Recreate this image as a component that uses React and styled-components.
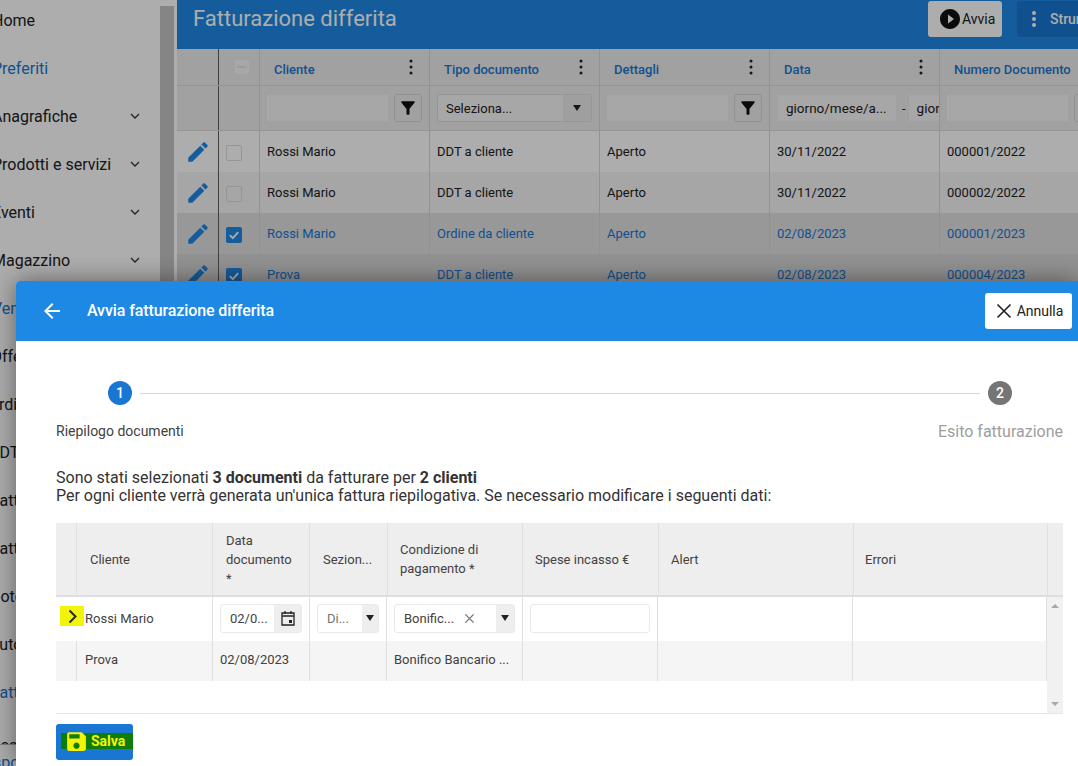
import React from 'react';
import styled, { createGlobalStyle } from 'styled-components';

const GlobalStyle = createGlobalStyle`
  html, body {
    margin: 0;
    padding: 0;
    background: #fff;
  }
  * {
    box-sizing: border-box;
  }
`;

const Page = styled.div`
  position: relative;
  width: 1078px;
  height: 766px;
  overflow: hidden;
  display: flex;
  font-family: Roboto, 'Liberation Sans', sans-serif;
  color: #212121;
`;

const Overlay = styled.div`
  position: absolute;
  inset: 0;
  background: rgba(0, 0, 0, 0.32);
`;

const Sidebar = styled.aside`
  width: 160px;
  flex: none;
  margin-top: -4px;
  overflow: hidden;
`;

const NavItem = styled.div`
  height: ${(p) => p.$height || 48}px;
  display: flex;
  align-items: center;
  justify-content: space-between;
  padding-right: 20px;
  font-size: 16px;
  white-space: nowrap;
  color: ${(p) => (p.$active ? '#1976d2' : '#212121')};
`;

const NavLabel = styled.span`
  margin-left: ${(p) => p.$offset}px;
`;

const SideFoot = styled.div`
  height: 29px;
  padding-top: 20px;
  overflow: hidden;
  font-size: 16px;
  line-height: 19px;
  border-bottom: 1px solid #b8b8b8;
  white-space: nowrap;
`;

const SideScroll = styled.div`
  width: 14px;
  flex: none;
  margin-top: 6px;
  background: #c4c4c4;
`;

const Main = styled.main`
  margin-left: 3px;
  flex: 1;
  min-width: 0;
`;

const TopBar = styled.header`
  height: 49px;
  background: #1e88e5;
  display: flex;
  justify-content: space-between;
  padding: 1px 0 0 16px;
  color: #fff;
`;

const PageTitle = styled.h1`
  margin: 3px 0 0;
  font-size: 22px;
  line-height: 30px;
  font-weight: 400;
`;

const TopActions = styled.div`
  display: flex;
  align-items: flex-start;
  gap: 15px;
  margin-right: -49px;
`;

const StartButton = styled.button`
  height: 36px;
  width: 74px;
  border: 0;
  border-radius: 3px;
  padding: 0 0 0 10px;
  background: #fff;
  display: flex;
  align-items: center;
  font: 14px Roboto, sans-serif;
  color: #212121;
`;

const ToolsButton = styled.button`
  height: 36px;
  width: 110px;
  border: 0;
  border-radius: 3px;
  padding: 0 0 0 8px;
  background: #1976d2;
  display: flex;
  align-items: center;
  gap: 7px;
  font: 500 14px Roboto, sans-serif;
  color: #fff;
`;

const GridTable = styled.div`
  width: 1100px;
`;

const GridRow = styled.div`
  display: grid;
  grid-template-columns: 42px 41px repeat(5, 170px);
  height: ${(p) => p.$height}px;
  background: ${(p) => p.$bg || '#fff'};
  border-bottom: ${(p) => (p.$line ? '1px solid #dcdcdc' : '0')};
  color: ${(p) => (p.$selected ? '#1976d2' : '#212121')};
  font-size: 13px;
`;

const GridCell = styled.div`
  display: flex;
  align-items: center;
  gap: 6px;
  min-width: 0;
  overflow: hidden;
  padding: 0 ${(p) => p.$pad ?? 7}px;
  border-right: 1px solid ${(p) => (p.$dark ? '#5f5f5f' : '#d8d8d8')};
  justify-content: ${(p) => (p.$center ? 'center' : 'flex-start')};
  white-space: nowrap;
`;

const HeadLabel = styled.span`
  flex: 1;
  padding: 4px 0 0 7px;
  font-size: 13px;
  font-weight: 500;
  color: #1976d2;
`;

const Dots = styled.svg`
  width: 18px;
  height: 18px;
  margin: -1px 2px 0 0;
  flex: none;
  fill: #212121;
`;

const FilterInput = styled.div`
  width: 121px;
  height: 26px;
  flex: none;
  background: #f7f7f7;
  font-size: 13px;
  line-height: 27px;
  padding-left: 8px;
  overflow: hidden;
`;

const SquareButton = styled.div`
  width: 28px;
  height: 28px;
  flex: none;
  border: 1px solid #d8d8d8;
  border-radius: 3px;
  background: #eee;
  display: grid;
  place-items: center;
`;

const SelectBox = styled.div`
  width: 155px;
  height: 28px;
  flex: none;
  border: 1px solid #ddd;
  border-radius: 3px;
  background: #f7f7f7;
  display: flex;
  align-items: center;
  justify-content: space-between;
  padding-left: 8px;
  font-size: 13px;
  overflow: hidden;
`;

const SelectArrow = styled.span`
  width: 28px;
  height: 100%;
  background: #eaeaea;
  display: grid;
  place-items: center;
`;

const Caret = styled.i`
  display: block;
  border-left: 4px solid transparent;
  border-right: 4px solid transparent;
  border-top: 6px solid #212121;
`;

const DateInput = styled(FilterInput)`
  width: ${(p) => p.$w}px;
  margin-right: ${(p) => p.$mr || 0}px;
  font-size: 13.5px;
`;

const DateDash = styled.span`
  margin-right: -3px;
`;

const Check = styled.span`
  width: 16px;
  height: 16px;
  flex: none;
  margin-top: 2px;
  border-radius: 2px;
  display: grid;
  place-items: center;
  background: ${(p) => (p.$on ? '#1e88e5' : 'transparent')};
  border: ${(p) => (p.$on ? '0' : '1px solid #ddd')};
`;

const HeadCheck = styled.span`
  width: 14px;
  height: 14px;
  margin-left: 5px;
  border-radius: 2px;
  background: #f8f8f8;
  display: grid;
  place-items: center;
  &::after {
    content: '';
    width: 10px;
    height: 2px;
    background: #e6e6e6;
  }
`;

const Dialog = styled.section`
  position: absolute;
  left: 16px;
  top: 281px;
  width: 1062px;
  height: 485px;
  background: #fff;
  border-radius: 4px 0 0 0;
  box-shadow: 0 0 24px rgba(0, 0, 0, 0.45);
`;

const DialogBar = styled.header`
  height: 60px;
  background: #1e88e5;
  border-radius: 4px 0 0 0;
  color: #fff;
  display: flex;
  align-items: center;
  padding: 0 6px 0 24px;
`;

const DialogTitle = styled.h2`
  flex: 1;
  margin: 0 0 2px 23px;
  font-size: 16px;
  letter-spacing: -0.1px;
  font-weight: 500;
`;

const CancelButton = styled.button`
  width: 87px;
  height: 36px;
  border: 0;
  border-radius: 3px;
  background: #fff;
  color: #212121;
  display: flex;
  align-items: center;
  justify-content: center;
  gap: 3px;
  font: 14px Roboto, sans-serif;
`;

const DialogBody = styled.div`
  padding: 40px 15px 0 40px;
`;

const Stepper = styled.div`
  display: flex;
  align-items: center;
  padding: 0 51px 0 52px;
  gap: 8px;
`;

const StepDot = styled.span`
  width: 24px;
  height: 24px;
  border-radius: 50%;
  flex: none;
  display: grid;
  place-items: center;
  color: #fff;
  font-size: 14px;
  font-weight: 500;
  background: ${(p) => (p.$active ? '#1976d2' : '#757575')};
`;

const StepLine = styled.span`
  flex: 1;
  height: 1px;
  background: #d6d6d6;
`;

const StepLabels = styled.div`
  display: flex;
  justify-content: space-between;
  align-items: center;
  height: 20px;
  margin-top: 16px;
`;

const StepLabel = styled.span`
  font-size: ${(p) => (p.$muted ? 16 : 14)}px;
  color: ${(p) => (p.$muted ? '#9e9e9e' : '#424242')};
`;

const Intro = styled.p`
  margin: 28px 0 0;
  font-size: 16px;
  line-height: 18px;
  color: #333;
`;

const DocTable = styled.div`
  position: relative;
  margin-top: 18px;
  height: 191px;
  background: #fff;
  border-bottom: 1px solid #e4e4e4;
  font-size: 13px;
  color: #424242;
`;

const DocRow = styled.div`
  display: grid;
  grid-template-columns: ${(p) =>
    p.$head ? '21px 136px 97px 78px 135px 136px 195px 194px 15px' : '21px 136px 97px 77px 136px 135px 195px 194px'};
  width: ${(p) => (p.$head ? '1007px' : '991px')};
  height: ${(p) => p.$height}px;
  background: ${(p) => p.$bg || '#fff'};
  border-bottom: ${(p) => (p.$head ? '2px solid #dedede' : '0')};
`;

const DocCell = styled.div`
  display: flex;
  align-items: center;
  min-width: 0;
  padding: 0 ${(p) => p.$pad ?? 7}px ${(p) => p.$lift || 0}px ${(p) => p.$left ?? 8}px;
  border-right: 1px solid ${(p) => (p.$none ? 'transparent' : '#e0e0e0')};
  line-height: 19px;
  white-space: ${(p) => (p.$wrap ? 'normal' : 'nowrap')};
`;

const FieldBox = styled.div`
  flex: 1;
  min-width: 0;
  height: 29px;
  border: 1px solid #eaeaea;
  border-radius: 3px;
  background: #fff;
  display: flex;
  align-items: center;
  padding-left: 9px;
  overflow: hidden;
  white-space: nowrap;
`;

const FieldText = styled.span`
  flex: 1;
  color: ${(p) => (p.$muted ? '#757575' : '#424242')};
`;

const FieldAddon = styled.span`
  width: ${(p) => p.$w || 16}px;
  height: 100%;
  flex: none;
  display: grid;
  place-items: center;
  background: #eee;
`;

const ClearMark = styled.svg`
  width: 11px;
  height: 11px;
  flex: none;
  margin-right: 21px;
  fill: none;
  stroke: #777;
  stroke-width: 1.5;
`;

const ScrollTrack = styled.div`
  position: absolute;
  right: 0;
  top: 74px;
  bottom: 0;
  width: 16px;
  background: #f1f1f1;
  display: flex;
  flex-direction: column;
  justify-content: space-between;
  align-items: center;
  padding: 7px 0;
`;

const ScrollArrow = styled.i`
  display: block;
  border-left: 4px solid transparent;
  border-right: 4px solid transparent;
  border-bottom: ${(p) => (p.$up ? '4px solid #a8a8a8' : '0')};
  border-top: ${(p) => (p.$up ? '0' : '4px solid #a8a8a8')};
`;

const ExpandMark = styled.span`
  position: absolute;
  left: 4px;
  top: 83px;
  width: 24px;
  height: 20px;
  background: #f4f40a;
  display: grid;
  place-items: center;
`;

const SaveButton = styled.button`
  display: flex;
  align-items: center;
  width: 77px;
  height: 36px;
  margin-top: 10px;
  padding: 0 0 2px 5px;
  border: 0;
  border-radius: 3px;
  background: #1976d2;
`;

const SaveMark = styled.span`
  flex: 1;
  height: 16px;
  display: flex;
  align-items: center;
  gap: 2px;
  background: #0f7d0a;
  color: #f4f40a;
  font: 700 14px Roboto, sans-serif;
`;

const SaveIcon = styled.svg`
  width: 25px;
  height: 25px;
  flex: none;
  margin-left: 3px;
  fill: #f4f40a;
`;

const Edit = () => (
  <svg width="26" height="26" viewBox="0 0 24 24" fill="#1e88e5">
    <path d="M3 17.25V21h3.75L17.81 9.94l-3.75-3.75L3 17.25zM20.71 7.04c.39-.39.39-1.02 0-1.41l-2.34-2.34c-.39-.39-1.02-.39-1.41 0l-1.83 1.83 3.75 3.75 1.83-1.83z" />
  </svg>
);

const Funnel = () => (
  <svg width="18" height="18" viewBox="0 0 24 24" fill="#111">
    <path d="M3.2 4.6C5.4 7.6 10 13 10 13v7c0 .6.4 1 1 1h2c.6 0 1-.4 1-1v-7s4.6-5.4 6.8-8.4c.5-.7 0-1.6-.8-1.6H4c-.8 0-1.3.9-.8 1.6z" />
  </svg>
);

const VDots = () => (
  <Dots viewBox="0 0 18 18">
    <circle cx="9" cy="3" r="1.5" />
    <circle cx="9" cy="9" r="1.5" />
    <circle cx="9" cy="15" r="1.5" />
  </Dots>
);

const Chevron = () => (
  <svg width="10" height="7" viewBox="0 0 10 7" fill="none" stroke="#333" strokeWidth="1.3">
    <path d="M1 1l4 4 4-4" />
  </svg>
);

const Tick = () => (
  <svg width="12" height="12" viewBox="0 0 12 12" fill="none" stroke="#fff" strokeWidth="1.8">
    <path d="M1.8 6.2l3 3 5.4-6" />
  </svg>
);

const navItems = [
  { label: 'Home', offset: -8 },
  { label: 'Preferiti', active: true, offset: -8 },
  { label: 'Anagrafiche', more: true, offset: -8 },
  { label: 'Prodotti e servizi', more: true, offset: -8 },
  { label: 'Eventi', more: true, offset: -8 },
  { label: 'Magazzino', more: true, offset: -8 },
  { label: 'Vendite', active: true, offset: -8 },
  { label: 'Offerte', offset: -9 },
  { label: 'Ordini', offset: -12 },
  { label: 'DDT', offset: -11 },
  { label: 'Fatture', offset: -9 },
  { label: 'Fatture', offset: -9 },
  { label: 'Note', offset: -11 },
  { label: 'Autofatture', offset: -11 },
  { label: 'Fatturazione', active: true, offset: -9 },
];

const headers = ['Cliente', 'Tipo documento', 'Dettagli', 'Data', 'Numero Documento'];

const rows = [
  { cliente: 'Rossi Mario', tipo: 'DDT a cliente', data: '30/11/2022', numero: '000001/2022', bg: '#fff' },
  { cliente: 'Rossi Mario', tipo: 'DDT a cliente', data: '30/11/2022', numero: '000002/2022', bg: '#f5f5f5' },
  { cliente: 'Rossi Mario', tipo: 'Ordine da cliente', data: '02/08/2023', numero: '000001/2023', bg: '#e0e0e0', selected: true },
  { cliente: 'Prova', tipo: 'DDT a cliente', data: '02/08/2023', numero: '000004/2023', bg: '#d8d8d8', selected: true },
];

export default function App() {
  return (
    <Page>
      <GlobalStyle />
      <Sidebar>
        {navItems.map((item, i) => (
          <NavItem key={i} $active={item.active}>
            <NavLabel $offset={item.offset}>{item.label}</NavLabel>
            {item.more && <Chevron />}
          </NavItem>
        ))}
        <SideFoot>
          <NavLabel $offset={-9}>Scadenze</NavLabel>
        </SideFoot>
        <NavItem $height={34} $active>
          <NavLabel $offset={-16}>Esporta</NavLabel>
        </NavItem>
      </Sidebar>
      <SideScroll />
      <Main>
        <TopBar>
          <PageTitle>Fatturazione differita</PageTitle>
          <TopActions>
            <StartButton>
              <svg width="24" height="24" viewBox="0 0 24 24" fill="#111">
                <path d="M12 2C6.48 2 2 6.48 2 12s4.48 10 10 10 10-4.48 10-10S17.52 2 12 2zm-2 14.5v-9l6 4.5-6 4.5z" />
              </svg>
              Avvia
            </StartButton>
            <ToolsButton>
              <svg width="18" height="18" viewBox="0 0 18 18" fill="#fff">
                <circle cx="9" cy="3" r="2" />
                <circle cx="9" cy="9" r="2" />
                <circle cx="9" cy="15" r="2" />
              </svg>
              Strumenti
            </ToolsButton>
          </TopActions>
        </TopBar>
        <GridTable>
          <GridRow $height={37} $bg="#eee" $line>
            <GridCell $dark />
            <GridCell $center>
              <HeadCheck />
            </GridCell>
            {headers.map((h) => (
              <GridCell key={h}>
                <HeadLabel>{h}</HeadLabel>
                <VDots />
              </GridCell>
            ))}
          </GridRow>
          <GridRow $height={45} $bg="#eee" $line>
            <GridCell $dark />
            <GridCell />
            <GridCell>
              <FilterInput />
              <SquareButton>
                <Funnel />
              </SquareButton>
            </GridCell>
            <GridCell>
              <SelectBox>
                Seleziona...
                <SelectArrow>
                  <Caret />
                </SelectArrow>
              </SelectBox>
            </GridCell>
            <GridCell>
              <FilterInput />
              <SquareButton>
                <Funnel />
              </SquareButton>
            </GridCell>
            <GridCell $pad={8}>
              <DateInput $w={118}>giorno/mese/a...</DateInput>
              <DateDash>-</DateDash>
              <DateInput $w={40} $mr={-20}>
                giorno
              </DateInput>
            </GridCell>
            <GridCell>
              <FilterInput />
              <SquareButton />
            </GridCell>
          </GridRow>
          {rows.map((r) => (
            <GridRow key={r.numero} $height={41} $bg={r.bg} $selected={r.selected}>
              <GridCell $pad={0} $center $dark>
                <Edit />
              </GridCell>
              <GridCell>
                <Check $on={r.selected}>{r.selected && <Tick />}</Check>
              </GridCell>
              <GridCell>{r.cliente}</GridCell>
              <GridCell>{r.tipo}</GridCell>
              <GridCell>Aperto</GridCell>
              <GridCell>{r.data}</GridCell>
              <GridCell>{r.numero}</GridCell>
            </GridRow>
          ))}
        </GridTable>
      </Main>
      <Overlay />
      <Dialog>
        <DialogBar>
          <svg width="24" height="24" viewBox="0 0 24 24" fill="#fff">
            <path d="M20 11H7.83l5.59-5.59L12 4l-8 8 8 8 1.41-1.41L7.83 13H20v-2z" />
          </svg>
          <DialogTitle>Avvia fatturazione differita</DialogTitle>
          <CancelButton>
            <svg width="20" height="20" viewBox="0 0 20 20" fill="none" stroke="#212121" strokeWidth="1.6">
              <path d="M3.5 3.5l13 13M16.5 3.5l-13 13" />
            </svg>
            Annulla
          </CancelButton>
        </DialogBar>
        <DialogBody>
          <Stepper>
            <StepDot $active>1</StepDot>
            <StepLine />
            <StepDot>2</StepDot>
          </Stepper>
          <StepLabels>
            <StepLabel>Riepilogo documenti</StepLabel>
            <StepLabel $muted>Esito fatturazione</StepLabel>
          </StepLabels>
          <Intro>
            Sono stati selezionati <b>3 documenti</b> da fatturare per <b>2 clienti</b>
            <br />
            Per ogni cliente verrà generata un'unica fattura riepilogativa. Se necessario modificare i seguenti dati:
          </Intro>
          <DocTable>
            <DocRow $head $height={74} $bg="#eee">
              <DocCell />
              <DocCell $left={13}>Cliente</DocCell>
              <DocCell $left={13} $pad={20} $wrap>
                Data documento *
              </DocCell>
              <DocCell $left={13}>Sezion...</DocCell>
              <DocCell $left={12} $wrap>
                Condizione di pagamento *
              </DocCell>
              <DocCell $left={12}>Spese incasso €</DocCell>
              <DocCell $left={12}>Alert</DocCell>
              <DocCell $left={11}>Errori</DocCell>
              <DocCell $none />
            </DocRow>
            <DocRow $height={44}>
              <DocCell $none />
              <DocCell $lift={2}>Rossi Mario</DocCell>
              <DocCell $left={7} $lift={2}>
                <FieldBox>
                  <FieldText>02/0...</FieldText>
                  <FieldAddon $w={27}>
                    <svg width="16" height="16" viewBox="0 0 16 16" fill="none" stroke="#222" strokeWidth="1.3">
                      <path d="M2 3h12v12H2zM2 6h12M5 1v3M11 1v3" />
                      <rect x="9" y="10" width="3" height="3" fill="#222" stroke="none" />
                    </svg>
                  </FieldAddon>
                </FieldBox>
              </DocCell>
              <DocCell $left={7} $lift={2}>
                <FieldBox>
                  <FieldText $muted>Di...</FieldText>
                  <FieldAddon>
                    <Caret />
                  </FieldAddon>
                </FieldBox>
              </DocCell>
              <DocCell $left={7} $lift={2}>
                <FieldBox>
                  <FieldText>Bonific...</FieldText>
                  <ClearMark viewBox="0 0 12 12">
                    <path d="M1.5 1.5l9 9M10.5 1.500l-9 9" />
                  </ClearMark>
                  <FieldAddon $w={18}>
                    <Caret />
                  </FieldAddon>
                </FieldBox>
              </DocCell>
              <DocCell $left={7} $lift={2}>
                <FieldBox />
              </DocCell>
              <DocCell />
              <DocCell />
            </DocRow>
            <DocRow $height={40} $bg="#f5f5f5">
              <DocCell />
              <DocCell $lift={4}>Prova</DocCell>
              <DocCell $left={7} $lift={4}>
                02/08/2023
              </DocCell>
              <DocCell />
              <DocCell $left={7} $lift={4}>
                Bonifico Bancario ...
              </DocCell>
              <DocCell />
              <DocCell />
              <DocCell />
            </DocRow>
            <ExpandMark>
              <svg width="11" height="15" viewBox="0 0 11 15" fill="none" stroke="#2a2a2a" strokeWidth="2">
                <path d="M2.5 1.5l6 6-6 6" />
              </svg>
            </ExpandMark>
            <ScrollTrack>
              <ScrollArrow $up />
              <ScrollArrow />
            </ScrollTrack>
          </DocTable>
          <SaveButton>
            <SaveMark>
              <SaveIcon viewBox="0 0 24 24">
                <path d="M17 3H5c-1.11 0-2 .9-2 2v14c0 1.1.89 2 2 2h14c1.1 0 2-.9 2-2V7l-4-4zm-5 16c-1.66 0-3-1.34-3-3s1.34-3 3-3 3 1.34 3 3-1.34 3-3 3zm3-10H5V5h10v4z" />
              </SaveIcon>
              Salva
            </SaveMark>
          </SaveButton>
        </DialogBody>
      </Dialog>
    </Page>
  );
}
